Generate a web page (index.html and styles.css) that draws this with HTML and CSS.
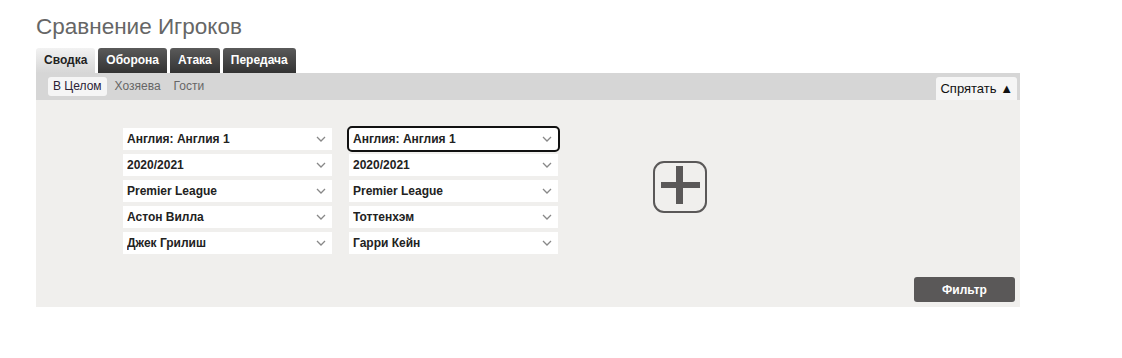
FILE: index.html
```html
<!DOCTYPE html>
<html lang="ru">
<head>
    <meta charset="UTF-8">
    <meta name="viewport" content="width=device-width, initial-scale=1.0">
    <title>Сравнение Игроков</title>
    <link rel="stylesheet" href="styles.css">
</head>
<body>
    <div class="page">
        <h1>Сравнение Игроков</h1>
        <div class="tabs">
            <a class="tab active" href="#">Сводка</a>
            <a class="tab" href="#">Оборона</a>
            <a class="tab" href="#">Атака</a>
            <a class="tab" href="#">Передача</a>
        </div>
        <div class="subbar">
            <div class="subtabs">
                <a class="subtab active" href="#">В Целом</a>
                <a class="subtab" href="#">Хозяева</a>
                <a class="subtab" href="#">Гости</a>
            </div>
            <button class="hide-btn" type="button">Спрятать &#9650;</button>
        </div>
        <div class="panel">
            <div class="compare">
                <div class="player">
                    <div class="pick"><select><option>Англия: Англия 1</option></select><svg class="chev" width="10" height="6" viewBox="0 0 10 6"><path d="M1 1l4 4 4-4" fill="none" stroke="#888" stroke-width="1.3"/></svg></div>
                    <div class="pick"><select><option>2020/2021</option></select><svg class="chev" width="10" height="6" viewBox="0 0 10 6"><path d="M1 1l4 4 4-4" fill="none" stroke="#888" stroke-width="1.3"/></svg></div>
                    <div class="pick"><select><option>Premier League</option></select><svg class="chev" width="10" height="6" viewBox="0 0 10 6"><path d="M1 1l4 4 4-4" fill="none" stroke="#888" stroke-width="1.3"/></svg></div>
                    <div class="pick"><select><option>Астон Вилла</option></select><svg class="chev" width="10" height="6" viewBox="0 0 10 6"><path d="M1 1l4 4 4-4" fill="none" stroke="#888" stroke-width="1.3"/></svg></div>
                    <div class="pick"><select><option>Джек Грилиш</option></select><svg class="chev" width="10" height="6" viewBox="0 0 10 6"><path d="M1 1l4 4 4-4" fill="none" stroke="#888" stroke-width="1.3"/></svg></div>
                </div>
                <div class="player">
                    <div class="pick focused"><select><option>Англия: Англия 1</option></select><svg class="chev" width="10" height="6" viewBox="0 0 10 6"><path d="M1 1l4 4 4-4" fill="none" stroke="#888" stroke-width="1.3"/></svg></div>
                    <div class="pick"><select><option>2020/2021</option></select><svg class="chev" width="10" height="6" viewBox="0 0 10 6"><path d="M1 1l4 4 4-4" fill="none" stroke="#888" stroke-width="1.3"/></svg></div>
                    <div class="pick"><select><option>Premier League</option></select><svg class="chev" width="10" height="6" viewBox="0 0 10 6"><path d="M1 1l4 4 4-4" fill="none" stroke="#888" stroke-width="1.3"/></svg></div>
                    <div class="pick"><select><option>Тоттенхэм</option></select><svg class="chev" width="10" height="6" viewBox="0 0 10 6"><path d="M1 1l4 4 4-4" fill="none" stroke="#888" stroke-width="1.3"/></svg></div>
                    <div class="pick"><select><option>Гарри Кейн</option></select><svg class="chev" width="10" height="6" viewBox="0 0 10 6"><path d="M1 1l4 4 4-4" fill="none" stroke="#888" stroke-width="1.3"/></svg></div>
                </div>
                <button class="add-btn" type="button" aria-label="Добавить игрока">
                    <svg width="54" height="52" viewBox="0 0 54 52">
                        <rect x="1" y="1" width="52" height="50" rx="10" fill="none" stroke="#5a5858" stroke-width="2"/>
                        <rect x="8" y="21" width="39" height="6" fill="#5a5858"/>
                        <rect x="23" y="5" width="7" height="38" fill="#5a5858"/>
                    </svg>
                </button>
            </div>
            <button class="filter-btn" type="button">Фильтр</button>
        </div>
    </div>
</body>
</html>
```

FILE: styles.css
```css
body {
    margin: 0;
    font-family: 'Liberation Sans', Arial, sans-serif;
    background: #fff;
    color: #333;
}
.page {
    width: 984px;
    margin-left: 36px;
    padding-top: 13px;
}
h1 {
    margin: 0 0 8px;
    font-size: 22.5px;
    font-weight: normal;
    line-height: 27px;
    color: #666;
}
.tabs {
    display: flex;
    gap: 3px;
    height: 25px;
}
.tab {
    display: block;
    padding: 0 8px;
    line-height: 25px;
    font-size: 12px;
    font-weight: bold;
    color: #fff;
    text-decoration: none;
    border-radius: 3px 3px 0 0;
    background: linear-gradient(#5a5a5a, #333);
}
.tab.active {
    color: #222;
    background: linear-gradient(#f2f2f2, #d6d6d6);
}
.subbar {
    display: flex;
    justify-content: space-between;
    align-items: flex-end;
    height: 27px;
    background: #d6d6d6;
}
.subtabs {
    display: flex;
    gap: 3px;
    padding-left: 12px;
    align-self: center;
}
.subtab {
    padding: 0 5px;
    line-height: 19px;
    font-size: 12px;
    color: #666;
    text-decoration: none;
    border-radius: 3px;
}
.subtab.active {
    background: #f5f5f5;
    color: #2b2236;
}
.hide-btn {
    height: 23px;
    margin-right: 3px;
    padding: 0 4px;
    border: none;
    border-radius: 3px 3px 0 0;
    background: #f5f5f5;
    font-family: inherit;
    font-size: 13px;
    color: #111;
}
.panel {
    display: flex;
    flex-direction: column;
    height: 207px;
    box-sizing: border-box;
    padding: 28px 5px 5px 87px;
    background: #f0efed;
}
.compare {
    display: flex;
    align-items: flex-start;
}
.player {
    display: flex;
    flex-direction: column;
    gap: 4px;
    width: 209px;
    margin-right: 17px;
}
.player + .player {
    margin-right: 95px;
}
.pick {
    position: relative;
    height: 22px;
    background: #fff;
}
.pick select {
    appearance: none;
    -webkit-appearance: none;
    width: 100%;
    height: 100%;
    border: none;
    background: transparent;
    padding: 0 20px 0 4px;
    font-family: inherit;
    font-size: 12px;
    font-weight: bold;
    color: #222;
    outline: none;
}
.pick.focused {
    outline: 2px solid #111;
    outline-offset: 0;
    border-radius: 3px;
}
.chev {
    position: absolute;
    right: 6px;
    top: 8px;
    pointer-events: none;
}
.add-btn {
    margin-top: 33px;
    padding: 0;
    border: none;
    background: none;
    line-height: 0;
}
.filter-btn {
    align-self: flex-end;
    margin-top: auto;
    width: 101px;
    height: 25px;
    border: none;
    border-radius: 3px;
    background: #5a5858;
    color: #fff;
    font-family: inherit;
    font-size: 12px;
    font-weight: bold;
}
```
